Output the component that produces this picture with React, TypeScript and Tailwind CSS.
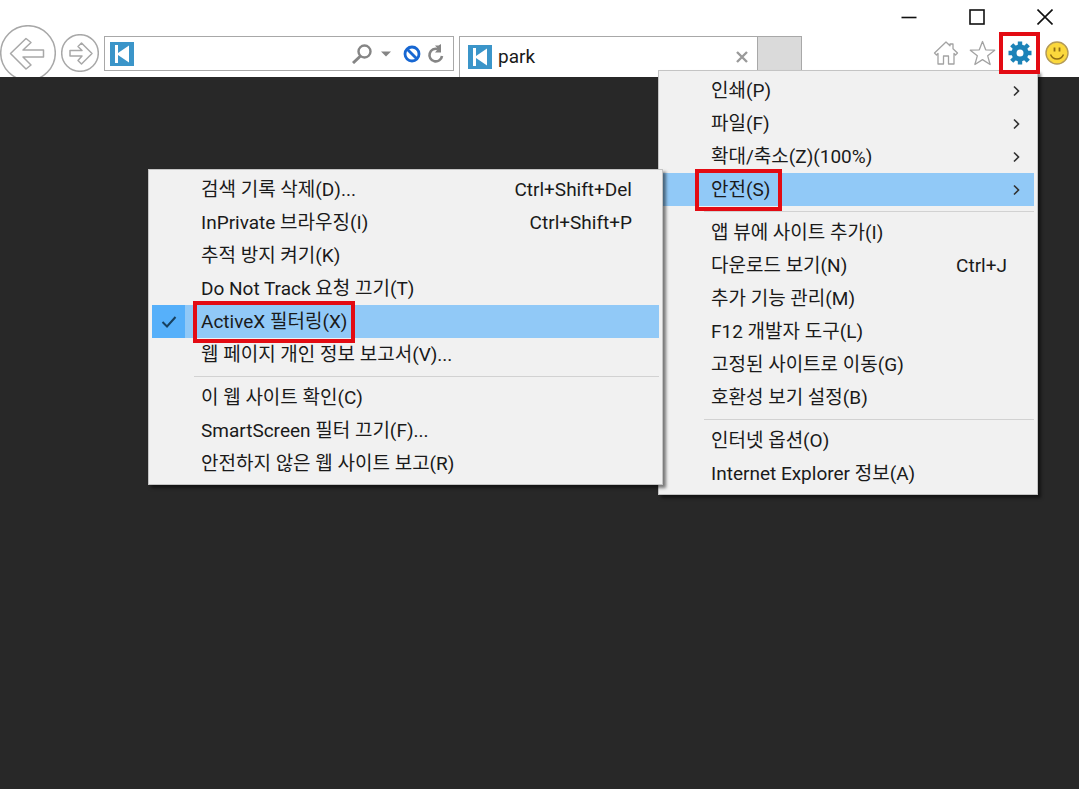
import { Fragment } from 'react'
import { clsx } from 'clsx'

interface MenuEntry {
  label: string
  shortcut?: string
  hasSubmenu?: boolean
  active?: boolean
  checked?: boolean
}

const toolsMenu: MenuEntry[][] = [
  [
    { label: '인쇄(P)', hasSubmenu: true },
    { label: '파일(F)', hasSubmenu: true },
    { label: '확대/축소(Z)(100%)', hasSubmenu: true },
    { label: '안전(S)', hasSubmenu: true, active: true },
  ],
  [
    { label: '앱 뷰에 사이트 추가(I)' },
    { label: '다운로드 보기(N)', shortcut: 'Ctrl+J' },
    { label: '추가 기능 관리(M)' },
    { label: 'F12 개발자 도구(L)' },
    { label: '고정된 사이트로 이동(G)' },
    { label: '호환성 보기 설정(B)' },
  ],
  [{ label: '인터넷 옵션(O)' }, { label: 'Internet Explorer 정보(A)' }],
]

const safetyMenu: MenuEntry[][] = [
  [
    { label: '검색 기록 삭제(D)...', shortcut: 'Ctrl+Shift+Del' },
    { label: 'InPrivate 브라우징(I)', shortcut: 'Ctrl+Shift+P' },
    { label: '추적 방지 켜기(K)' },
    { label: 'Do Not Track 요청 끄기(T)' },
    { label: 'ActiveX 필터링(X)', active: true, checked: true },
    { label: '웹 페이지 개인 정보 보고서(V)...' },
  ],
  [
    { label: '이 웹 사이트 확인(C)' },
    { label: 'SmartScreen 필터 끄기(F)...' },
    { label: '안전하지 않은 웹 사이트 보고(R)' },
  ],
]

function Menu({ groups, label, className }: { groups: MenuEntry[][]; label: string; className?: string }) {
  return (
    <div
      role="menu"
      aria-label={label}
      className={clsx('absolute border border-[#c4c4c4] bg-[#f1f1f1] p-[3px] pb-1 shadow-[3px_3px_3px_rgba(0,0,0,0.5)]', className)}
    >
      {groups.map((group, i) => (
        <Fragment key={i}>
          {i > 0 && (
            <div className="flex h-[10px] items-center pl-[42px]">
              <div className="h-px w-full bg-[#d2d2d2]" />
            </div>
          )}
          {group.map((entry) => (
            <MenuItem key={entry.label} entry={entry} />
          ))}
        </Fragment>
      ))}
    </div>
  )
}

function MenuItem({ entry }: { entry: MenuEntry }) {
  return (
    <button
      type="button"
      role={entry.checked ? 'menuitemcheckbox' : 'menuitem'}
      aria-checked={entry.checked}
      className={clsx('flex h-[33px] w-full items-center text-left', entry.active && 'bg-[#91c9f7]')}
    >
      <span className={clsx('flex h-full w-[33px] shrink-0 items-center justify-center', entry.checked && 'bg-[#56b0fa]')}>
        {entry.checked && (
          <svg width="16" height="14" viewBox="0 0 16 14" fill="none" stroke="#17405f" strokeWidth="2">
            <path d="M1.5 7 6 11.5 14.5 2" />
          </svg>
        )}
      </span>
      <span className="relative ml-4 whitespace-nowrap">
        {entry.label}
        {entry.active && (
          <span
            className={clsx(
              'absolute -inset-y-2 z-10 border-4 border-[#e30b13]',
              entry.hasSubmenu ? '-left-4 -right-3' : '-inset-x-2',
            )}
          />
        )}
      </span>
      <span className="ml-auto pr-[27px]">{entry.shortcut}</span>
      {entry.hasSubmenu && (
        <svg className="mr-[13px]" width="9" height="12" viewBox="0 0 9 12" fill="none" stroke="#333" strokeWidth="1.6">
          <path d="M2 1.5 6.5 6 2 10.5" />
        </svg>
      )}
    </button>
  )
}

function SiteIcon() {
  return (
    <svg className="shrink-0" width="24" height="24" viewBox="0 0 24 24">
      <rect width="24" height="24" fill="#3b95c9" />
      <path d="M5 3h3v8L19 3.500v17L8 13v8H5z" fill="#fff" />
    </svg>
  )
}

function WindowControls() {
  return (
    <div className="flex">
      <button type="button" aria-label="최소화" className="flex h-[34px] w-[68px] items-center justify-center">
        <svg width="16" height="16" viewBox="0 0 16 16" stroke="#111" strokeWidth="1.6">
          <path d="M.5 8.5h15" />
        </svg>
      </button>
      <button type="button" aria-label="최대화" className="flex h-[34px] w-[68px] items-center justify-center">
        <svg width="16" height="16" viewBox="0 0 16 16" fill="none" stroke="#111" strokeWidth="1.6">
          <rect x="1" y="1" width="14" height="14" />
        </svg>
      </button>
      <button type="button" aria-label="닫기" className="flex h-[34px] w-[68px] items-center justify-center">
        <svg width="16" height="16" viewBox="0 0 16 16" fill="none" stroke="#111" strokeWidth="1.6">
          <path d="m.5.5 15 15m0-15-15 15" />
        </svg>
      </button>
    </div>
  )
}

function Toolbar() {
  return (
    <div className="flex h-[38px] justify-end pr-1">
      <button type="button" aria-label="홈" className="flex w-[37px] items-center justify-center">
        <svg width="26" height="24" viewBox="0 0 26 24" fill="none" stroke="#a3a3a3" strokeWidth="1.3" strokeLinejoin="round">
          <path d="M13 1 1.500 12l2 2L5 12.500V23h5.500v-8h5v8H21V12.500l1.500 1.500 2-2L20 7.700V3h-3v1.800z" />
        </svg>
      </button>
      <button type="button" aria-label="즐겨찾기" className="flex w-[37px] items-center justify-center">
        <svg width="27" height="26" viewBox="0 0 27 26" fill="none" stroke="#a3a3a3" strokeWidth="1.3" strokeLinejoin="round">
          <path d="m13.500 1.500 3.200 8.300 9 .4-7 5.600 2.400 8.700-7.600-4.900-7.600 4.900 2.400-8.700-7-5.600 9-.4z" />
        </svg>
      </button>
      <button type="button" aria-label="도구" className="relative z-20 flex w-[37px] items-center justify-center">
        <svg width="24" height="24" viewBox="-12 -12 24 24" fill="none" stroke="#1c83b8">
          <circle r="6" strokeWidth="5" />
          <g strokeWidth="4.400">
            <path d="M0-11.500V-7M0 7v4.500M-11.500 0H-7M7 0h4.500" />
            <path d="m-8.300-8.300 3.300 3.300M5 5l3.300 3.300M8.300-8.300 5-5M-5 5l-3.300 3.300" />
          </g>
        </svg>
        <span className="absolute -inset-x-[2px] -inset-y-[2px] border-4 border-[#e30b13]" />
      </button>
      <button type="button" aria-label="의견 보내기" className="flex w-[37px] items-center justify-center">
        <svg width="24" height="24" viewBox="0 0 24 24">
          <circle cx="12" cy="12" r="11" fill="#fbd83c" stroke="#b39a58" strokeWidth="1.400" />
          <path d="M9.500 6.500v4M14.500 6.500v4" stroke="#8f6d14" strokeWidth="1.800" />
          <path d="M5.500 13.500c2.500 6 10.500 6 13 0" fill="none" stroke="#8f6d14" strokeWidth="1.500" />
        </svg>
      </button>
    </div>
  )
}

function AddressBar() {
  return (
    <div className="ml-[5px] mt-9 flex h-[35px] min-w-0 flex-1 items-center border border-[#a8a8a8] pl-[5px] pr-2">
      <SiteIcon />
      <input aria-label="주소" className="h-full min-w-0 flex-1 px-2 outline-none" />
      <button type="button" aria-label="검색">
        <svg width="20" height="20" viewBox="0 0 20 20" fill="none" stroke="#858585">
          <circle cx="12.500" cy="7.500" r="6" strokeWidth="2.400" />
          <path d="m8.500 12-7.500 7" strokeWidth="3" />
        </svg>
      </button>
      <button type="button" aria-label="검색 옵션" className="ml-[9px]">
        <svg width="10" height="6" viewBox="0 0 10 6" fill="#858585">
          <path d="M0 .5h10L5 5.500z" />
        </svg>
      </button>
      <button type="button" aria-label="차단된 콘텐츠" className="ml-3">
        <svg width="18" height="18" viewBox="0 0 18 18" fill="none" stroke="#1767d2" strokeWidth="2.800">
          <circle cx="9" cy="9" r="7" />
          <path d="m4 4 10 10" />
        </svg>
      </button>
      <button type="button" aria-label="새로 고침" className="ml-[6px]">
        <svg width="18" height="20" viewBox="0 0 18 20" fill="none">
          <path d="M11 5.200A6.300 6.300 0 1 0 15 12" stroke="#858585" strokeWidth="2.600" />
          <path d="M8 1.500h3.500L14 0v8.500H8L11 5z" fill="#858585" />
        </svg>
      </button>
    </div>
  )
}

function BrowserHeader() {
  return (
    <header className="flex h-[77px] bg-white">
      <button type="button" aria-label="뒤로" className="h-[52px] shrink-0 self-end overflow-hidden pb-px">
        <svg className="-mb-1" width="56" height="56" viewBox="0 0 56 56" fill="none" stroke="#a8a8a8" strokeWidth="1.500">
          <circle cx="28" cy="28" r="27.300" />
          <path d="M10.500 28.500 26 13.500l5 4-8 7.500h20.500v7H23l8 8-5 4z" strokeLinejoin="round" />
        </svg>
      </button>
      <button type="button" aria-label="앞으로" className="ml-[5px] mt-[34px] h-[38px] shrink-0">
        <svg width="38" height="38" viewBox="0 0 38 38" fill="none" stroke="#a8a8a8" strokeWidth="1.500">
          <circle cx="19" cy="19" r="18.300" />
          <path d="M31 19.500 20.500 9l-3.500 3.500 4 4H9v5.500h12l-4 4.500 3.500 3.500z" strokeLinejoin="round" />
        </svg>
      </button>
      <AddressBar />
      <div className="ml-[5px] mt-9 flex w-[299px] items-center border-x border-t border-[#a8a8a8] pl-2 pr-[9px]">
        <SiteIcon />
        <span className="ml-[6px] flex-1">park</span>
        <button type="button" aria-label="탭 닫기">
          <svg width="12" height="12" viewBox="0 0 12 12" stroke="#9a9a9a" strokeWidth="2.400">
            <path d="m1 1 10 10M11 1 1 11" />
          </svg>
        </button>
      </div>
      <button type="button" aria-label="새 탭" className="mt-9 h-[35px] w-11 shrink-0 border border-l-0 border-[#a8a8a8] bg-[#dadada]" />
      <div className="ml-[73px] shrink-0">
        <WindowControls />
        <Toolbar />
      </div>
    </header>
  )
}

export default function App() {
  return (
    <div className="relative flex min-h-screen flex-col bg-[#282828] font-[Roboto,'Noto_Sans_CJK_KR',sans-serif] text-[19px] leading-[26px] text-[#1a1a1a]">
      <BrowserHeader />
      <main className="flex-1" />
      <div className="absolute right-[41px] top-[70px] z-10">
        <div className="relative w-[380px]">
          <Menu groups={toolsMenu} label="도구" className="left-0 top-0 w-full" />
          <Menu groups={safetyMenu} label="안전" className="right-[calc(100%-5px)] top-[99px] w-[515px]" />
        </div>
      </div>
    </div>
  )
}
